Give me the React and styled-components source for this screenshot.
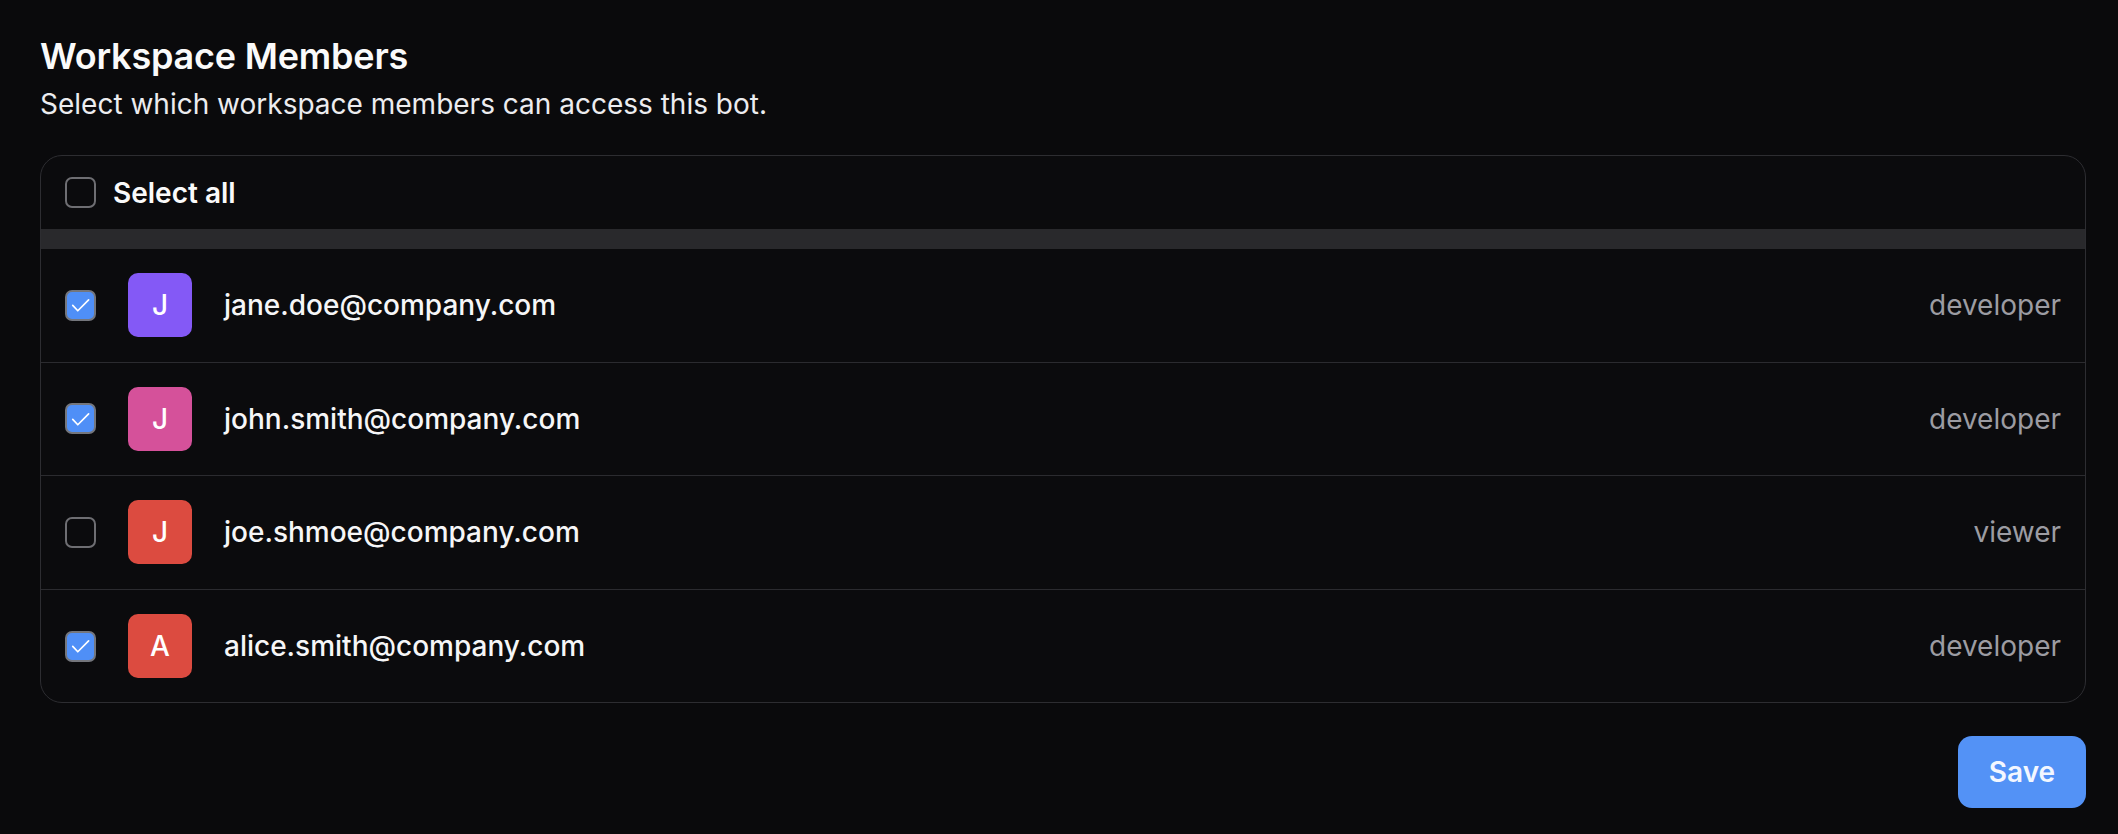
import styled, { createGlobalStyle } from 'styled-components';
import { useState } from 'react';

const Global = createGlobalStyle`
  html, body {
    margin: 0;
    background: #0a0a0c;
  }
  body {
    font-family: Inter, "Noto Sans", sans-serif;
    -webkit-font-smoothing: antialiased;
  }
`;

const Page = styled.div`
  padding: 34px 32px 24px 40px;
  display: flex;
  flex-direction: column;
`;

const Title = styled.h2`
  margin: 0;
  font-size: 36px;
  line-height: 44px;
  font-weight: 600;
  color: #fafafa;
  letter-spacing: -0.2px;
`;

const Subtitle = styled.p`
  margin: 6px 0 0;
  font-size: 28px;
  line-height: 40px;
  color: #ececef;
`;

const Card = styled.div`
  margin-top: 31px;
  border: 1px solid #2d2d31;
  border-radius: 22px;
  background: #0b0b0d;
  overflow: hidden;
`;

const Header = styled.label`
  display: flex;
  align-items: center;
  gap: 17px;
  height: 73px;
  padding: 0 24px;
  cursor: pointer;
`;

const HeaderText = styled.span`
  font-size: 28px;
  font-weight: 600;
  color: #fafafa;
`;

const Band = styled.div`
  height: 20px;
  background: #29292c;
`;

const Row = styled.div`
  display: flex;
  align-items: center;
  padding: 24.3px 24px;
  & + & {
    border-top: 1px solid #2b2b2f;
  }
`;

const Box = styled.span`
  flex: none;
  width: 31px;
  height: 31px;
  box-sizing: border-box;
  border-radius: 7px;
  border: 2px solid ${(p) => (p.$checked ? '#74767c' : '#6e6e72')};
  background: ${(p) => (p.$checked ? '#4f8ff7' : 'transparent')};
  display: flex;
  align-items: center;
  justify-content: center;
  cursor: pointer;
`;

const Avatar = styled.div`
  flex: none;
  margin-left: 32px;
  width: 64px;
  height: 64px;
  border-radius: 10px;
  background: ${(p) => p.$color};
  color: #ffffff;
  font-size: 28px;
  font-weight: 500;
  display: flex;
  align-items: center;
  justify-content: center;
`;

const Email = styled.span`
  margin-left: 32px;
  flex: 1;
  font-size: 28px;
  font-weight: 500;
  color: #f6f6f7;
`;

const Role = styled.span`
  font-size: 28px;
  color: #9c9ca2;
`;

const Footer = styled.div`
  display: flex;
  justify-content: flex-end;
  margin-top: 33px;
`;

const SaveButton = styled.button`
  width: 128px;
  height: 72px;
  border: none;
  border-radius: 14px;
  background: #5392f6;
  color: #f3f7ff;
  font-family: inherit;
  font-size: 28px;
  font-weight: 600;
  cursor: pointer;
`;

function Check({ checked, onClick }) {
  return (
    <Box $checked={checked} onClick={onClick}>
      {checked && (
        <svg width="28" height="28" viewBox="0 0 16 16" fill="none">
          <path d="M3.4 8.2 L6.4 11.4 L12.8 5" stroke="#ffffff" strokeWidth="1" strokeLinecap="round" strokeLinejoin="round" />
        </svg>
      )}
    </Box>
  );
}

const initialMembers = [
  { email: 'jane.doe@company.com', role: 'developer', color: '#8459f6', checked: true },
  { email: 'john.smith@company.com', role: 'developer', color: '#d5519a', checked: true },
  { email: 'joe.shmoe@company.com', role: 'viewer', color: '#dc4b40', checked: false },
  { email: 'alice.smith@company.com', role: 'developer', color: '#dc4b40', checked: true },
];

export default function App() {
  const [members, setMembers] = useState(initialMembers);
  const allChecked = members.every((m) => m.checked);

  const toggle = (i) => {
    setMembers(members.map((m, j) => (j === i ? { ...m, checked: !m.checked } : m)));
  };

  return (
    <>
      <Global />
      <Page>
        <Title>Workspace Members</Title>
        <Subtitle>Select which workspace members can access this bot.</Subtitle>

        <Card>
          <Header>
            <Check
              checked={allChecked}
              onClick={() => setMembers(members.map((m) => ({ ...m, checked: !allChecked })))}
            />
            <HeaderText>Select all</HeaderText>
          </Header>
          <Band />
          {members.map((m, i) => (
            <Row key={m.email}>
              <Check checked={m.checked} onClick={() => toggle(i)} />
              <Avatar $color={m.color}>{m.email[0].toUpperCase()}</Avatar>
              <Email>{m.email}</Email>
              <Role>{m.role}</Role>
            </Row>
          ))}
        </Card>

        <Footer>
          <SaveButton>Save</SaveButton>
        </Footer>
      </Page>
    </>
  );
}
